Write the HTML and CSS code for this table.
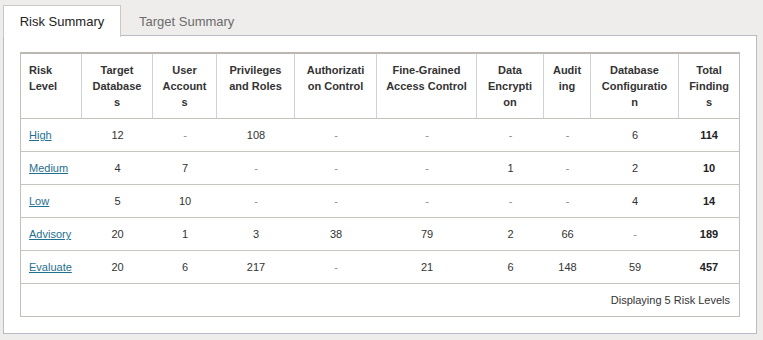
FILE: index.html
```html
<!DOCTYPE html>
<html>
<head>
<meta charset="utf-8">
<link rel="stylesheet" href="styles.css">
</head>
<body>
<div class="tabs">
  <div class="tab active">Risk Summary</div>
  <div class="tab">Target Summary</div>
</div>
<div class="panel">
  <table class="grid">
    <colgroup>
      <col class="c1"><col class="c2"><col class="c3"><col class="c4"><col class="c5">
      <col class="c6"><col class="c7"><col class="c8"><col class="c9"><col class="c10">
    </colgroup>
    <thead>
      <tr>
        <th class="first">Risk<br>Level</th>
        <th>Target<br>Database<br>s</th>
        <th>User<br>Account<br>s</th>
        <th>Privileges<br>and Roles</th>
        <th>Authorizati<br>on Control</th>
        <th>Fine-Grained<br>Access Control</th>
        <th>Data<br>Encrypti<br>on</th>
        <th>Audit<br>ing</th>
        <th>Database<br>Configuratio<br>n</th>
        <th class="last">Total<br>Finding<br>s</th>
      </tr>
    </thead>
    <tbody>
      <tr>
        <td class="first"><a href="#">High</a></td>
        <td>12</td><td class="nil">-</td><td>108</td><td class="nil">-</td><td class="nil">-</td><td class="nil">-</td><td class="nil">-</td><td>6</td><td class="total">114</td>
      </tr>
      <tr>
        <td class="first"><a href="#">Medium</a></td>
        <td>4</td><td>7</td><td class="nil">-</td><td class="nil">-</td><td class="nil">-</td><td>1</td><td class="nil">-</td><td>2</td><td class="total">10</td>
      </tr>
      <tr>
        <td class="first"><a href="#">Low</a></td>
        <td>5</td><td>10</td><td class="nil">-</td><td class="nil">-</td><td class="nil">-</td><td class="nil">-</td><td class="nil">-</td><td>4</td><td class="total">14</td>
      </tr>
      <tr>
        <td class="first"><a href="#">Advisory</a></td>
        <td>20</td><td>1</td><td>3</td><td>38</td><td>79</td><td>2</td><td>66</td><td class="nil">-</td><td class="total">189</td>
      </tr>
      <tr>
        <td class="first"><a href="#">Evaluate</a></td>
        <td>20</td><td>6</td><td>217</td><td class="nil">-</td><td>21</td><td>6</td><td>148</td><td>59</td><td class="total">457</td>
      </tr>
    </tbody>
    <tfoot>
      <tr>
        <td colspan="10" class="footer">Displaying 5 Risk Levels</td>
      </tr>
    </tfoot>
  </table>
</div>
</body>
</html>
```

FILE: styles.css
```css
html, body {
  margin: 0;
  padding: 0;
}
body {
  background: #eeedeb;
  font-family: "Liberation Sans", Arial, sans-serif;
  color: #333;
  padding: 5px 6px 0 3px;
  width: 763px;
  height: 340px;
  box-sizing: border-box;
}
.tabs {
  display: flex;
  height: 31px;
}
.tab {
  padding: 0 17px;
  font-size: 13px;
  line-height: 31px;
  color: #6b6b6b;
  border: 1px solid transparent;
  border-bottom: none;
  box-sizing: border-box;
  height: 32px;
  position: relative;
  z-index: 1;
}
.tab.active {
  background: #fff;
  color: #222;
  border-color: #c9c9c9;
  width: 118px;
  text-align: center;
  padding: 0;
}
.panel {
  background: #fff;
  border: 1px solid #b7bbc3;
  margin-top: -1px;
  height: 299px;
  box-sizing: border-box;
  padding: 16px 16px 0 16px;
}
.grid {
  table-layout: fixed;
  border-collapse: separate;
  border-spacing: 0;
  width: 720px;
  border-top: 2px solid #bcb7b1;
  border-left: 1px solid #c3beb9;
  border-right: 1px solid #c3beb9;
  font-size: 11px;
}
.c1 { width: 61px; }
.c2 { width: 71px; }
.c3 { width: 64px; }
.c4 { width: 78px; }
.c5 { width: 82px; }
.c6 { width: 100px; }
.c7 { width: 67px; }
.c8 { width: 47px; }
.c9 { width: 88px; }
.c10 { width: 60px; }
.grid th {
  font-weight: bold;
  line-height: 16px;
  padding: 8px 2px;
  vertical-align: top;
  text-align: center;
  color: #333;
  border-bottom: 1px solid #c6c2be;
  border-right: 1px solid #cdd1d8;
}
.grid th.last {
  border-right: none;
}
.grid th.first,
.grid td.first {
  text-align: left;
  padding-left: 8px;
}
.grid td {
  line-height: 16px;
  padding: 8px 2px;
  text-align: center;
  color: #333;
  border-bottom: 1px solid #c8c4c0;
}
.grid td.nil {
  color: #8a8a8a;
}
.grid td.total {
  font-weight: bold;
  color: #222;
}
.grid a {
  color: #1f6f90;
  text-decoration: underline;
}
.grid td.footer {
  text-align: right;
  padding-right: 9px;
  border-bottom: 1px solid #c3beb9;
}
```
